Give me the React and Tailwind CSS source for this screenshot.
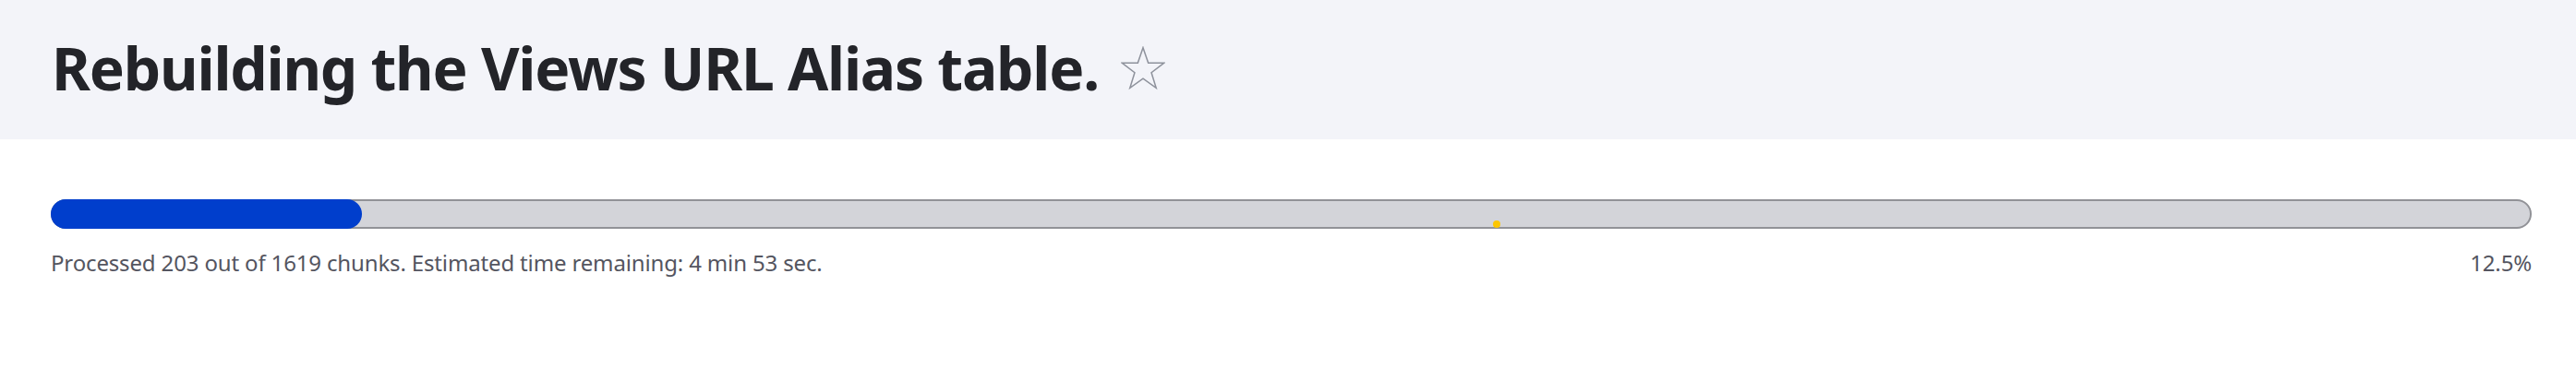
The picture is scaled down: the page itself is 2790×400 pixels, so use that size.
import React from "react";

function Star() {
  return (
    <svg width="48" height="48" viewBox="2 1 44 43" className="ml-[24px] shrink-0">
      <polygon
        points="24,2 29.2,17.2 45,17.2 32.3,26.8 37,42 24,32.8 11,42 15.7,26.8 3,17.2 18.8,17.2"
        fill="none"
        stroke="#8e929c"
        strokeWidth="1.4"
        strokeLinejoin="miter"
      />
    </svg>
  );
}

export default function App() {
  const pct = 12.5;
  return (
    <div className="w-[2790px] h-[400px] bg-white" style={{ fontFamily: '"Noto Sans", "Open Sans", sans-serif' }}>
      <header className="h-[151px] bg-[#f3f4f9] flex items-center pl-[56px]">
        <h1 className="text-[64px] leading-none font-bold tracking-[-1.2px] text-[#232429] flex items-center -mt-[4px]">
          <span>Rebuilding the Views URL Alias table.</span>
          <Star />
        </h1>
      </header>
      <main className="pl-[55px] pr-[48px] pt-[65px]">
        <div className="relative h-[32px] rounded-full border-2 border-[#919297] bg-[#d3d4d9]">
          <div
            className="absolute -left-[2px] -top-[2px] -bottom-[2px] rounded-full bg-[#003ecc]"
            style={{ width: `calc(${pct}% + 2px)` }}
          />
          <div className="absolute left-[1560px] top-[21px] w-[8px] h-[8px] rounded-full bg-[#fcc600]" />
        </div>
        <div className="flex justify-between mt-[20px] text-[24px] leading-[34px] tracking-[-0.15px] text-[#545560]">
          <span>Processed 203 out of 1619 chunks. Estimated time remaining: 4 min 53 sec.</span>
          <span>12.5%</span>
        </div>
      </main>
    </div>
  );
}
